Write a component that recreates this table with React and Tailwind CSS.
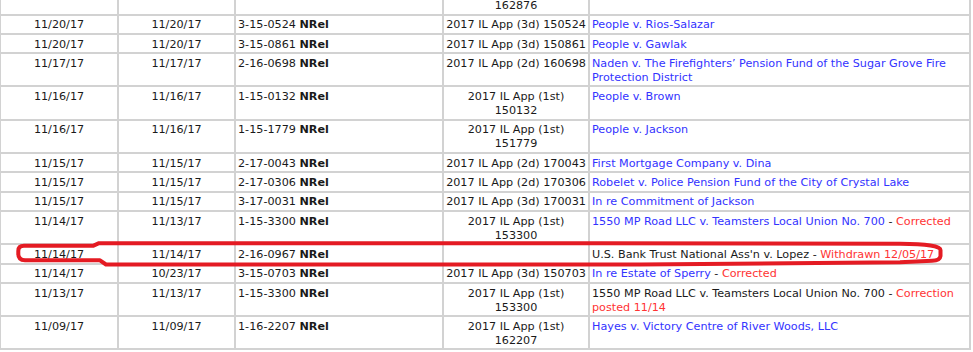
import React from 'react';

const rows = [
  { filed: '11/20/17', released: '11/20/17', docket: '3-15-0524', cite: ['2017 IL App (3d) 150524'], title: 'People v. Rios-Salazar' },
  { filed: '11/20/17', released: '11/20/17', docket: '3-15-0861', cite: ['2017 IL App (3d) 150861'], title: 'People v. Gawlak' },
  { filed: '11/17/17', released: '11/17/17', docket: '2-16-0698', cite: ['2017 IL App (2d) 160698'], title: 'Naden v. The Firefighters\u2019 Pension Fund of the Sugar Grove Fire Protection District' },
  { filed: '11/16/17', released: '11/16/17', docket: '1-15-0132', cite: ['2017 IL App (1st)', '150132'], title: 'People v. Brown' },
  { filed: '11/16/17', released: '11/16/17', docket: '1-15-1779', cite: ['2017 IL App (1st)', '151779'], title: 'People v. Jackson' },
  { filed: '11/15/17', released: '11/15/17', docket: '2-17-0043', cite: ['2017 IL App (2d) 170043'], title: 'First Mortgage Company v. Dina' },
  { filed: '11/15/17', released: '11/15/17', docket: '2-17-0306', cite: ['2017 IL App (2d) 170306'], title: 'Robelet v. Police Pension Fund of the City of Crystal Lake' },
  { filed: '11/15/17', released: '11/15/17', docket: '3-17-0031', cite: ['2017 IL App (3d) 170031'], title: 'In re Commitment of Jackson' },
  { filed: '11/14/17', released: '11/13/17', docket: '1-15-3300', cite: ['2017 IL App (1st)', '153300'], title: '1550 MP Road LLC v. Teamsters Local Union No. 700', note: ['Corrected'] },
  { filed: '11/14/17', released: '11/14/17', docket: '2-16-0967', cite: [], title: "U.S. Bank Trust National Ass'n v. Lopez", plain: true, note: ['Withdrawn 12/05/17'] },
  { filed: '11/14/17', released: '10/23/17', docket: '3-15-0703', cite: ['2017 IL App (3d) 150703'], title: 'In re Estate of Sperry', note: ['Corrected'] },
  { filed: '11/13/17', released: '11/13/17', docket: '1-15-3300', cite: ['2017 IL App (1st)', '153300'], title: '1550 MP Road LLC v. Teamsters Local Union No. 700', plain: true, note: ['Correction', 'posted 11/14'] },
  { filed: '11/09/17', released: '11/09/17', docket: '1-16-2207', cite: ['2017 IL App (1st)', '162207'], title: 'Hayes v. Victory Centre of River Woods, LLC' },
];

const cell = 'bg-white pt-[2.8px] pb-[0.8px] px-[2px]';

function Row({ r }) {
  return (
    <>
      <div className={`${cell} text-center`}>{r.filed}</div>
      <div className={`${cell} text-center`}>{r.released}</div>
      <div className={cell}>
        {r.docket} <b>NRel</b>
      </div>
      <div className={`${cell} text-center whitespace-nowrap`}>
        {r.cite.map((c, i) => (
          <div key={i}>{c}</div>
        ))}
      </div>
      <div className={cell}>
        <span className={r.plain ? '' : 'text-[#3333ff]'}>{r.title}</span>
        {r.note && (
          <>
            {' - '}
            <span className="text-[#ff3333]">{r.note[0]}</span>
            {r.note[1] && (
              <>
                <br />
                <span className="text-[#ff3333]">{r.note[1]}</span>
              </>
            )}
          </>
        )}
      </div>
    </>
  );
}

export default function App() {
  return (
    <div
      className="relative w-[973px] h-[352px] overflow-hidden bg-white text-[11.2px] leading-[13.8px] text-[#1a1a1a]"
      style={{ fontFamily: "Verdana, 'DejaVu Sans', sans-serif" }}
    >
      <div className="ml-[-1px] w-[972px] grid grid-cols-[116px_115px_206px_144px_379px] gap-[2px] px-[2px] pb-[2px] bg-[#d2d2d2]">
        <div className="bg-white h-[13.5px]"></div>
        <div className="bg-white"></div>
        <div className="bg-white"></div>
        <div className="bg-white text-center -mt-px">162876</div>
        <div className="bg-white"></div>
        {rows.map((r, i) => (
          <Row key={i} r={r} />
        ))}
      </div>

      <svg className="absolute inset-0 pointer-events-none" width="973" height="352" viewBox="0 0 973 352">
        <path
          d="M 24 245.8 L 93 245.8 L 99 243.2 L 600 243.3 L 900 243.8 Q 940.5 244 940.5 250 L 940.5 256 Q 940 260.5 932 260.8 L 900 262.3 L 640 264.4 L 106 264.5 L 100 260.3 L 25 260.3 Q 18.3 260 18.3 254 L 18.3 251 Q 18.3 245.8 24 245.8 Z"
          fill="none"
          stroke="#e41b23"
          strokeWidth="4"
          strokeLinejoin="round"
        />
      </svg>
    </div>
  );
}
